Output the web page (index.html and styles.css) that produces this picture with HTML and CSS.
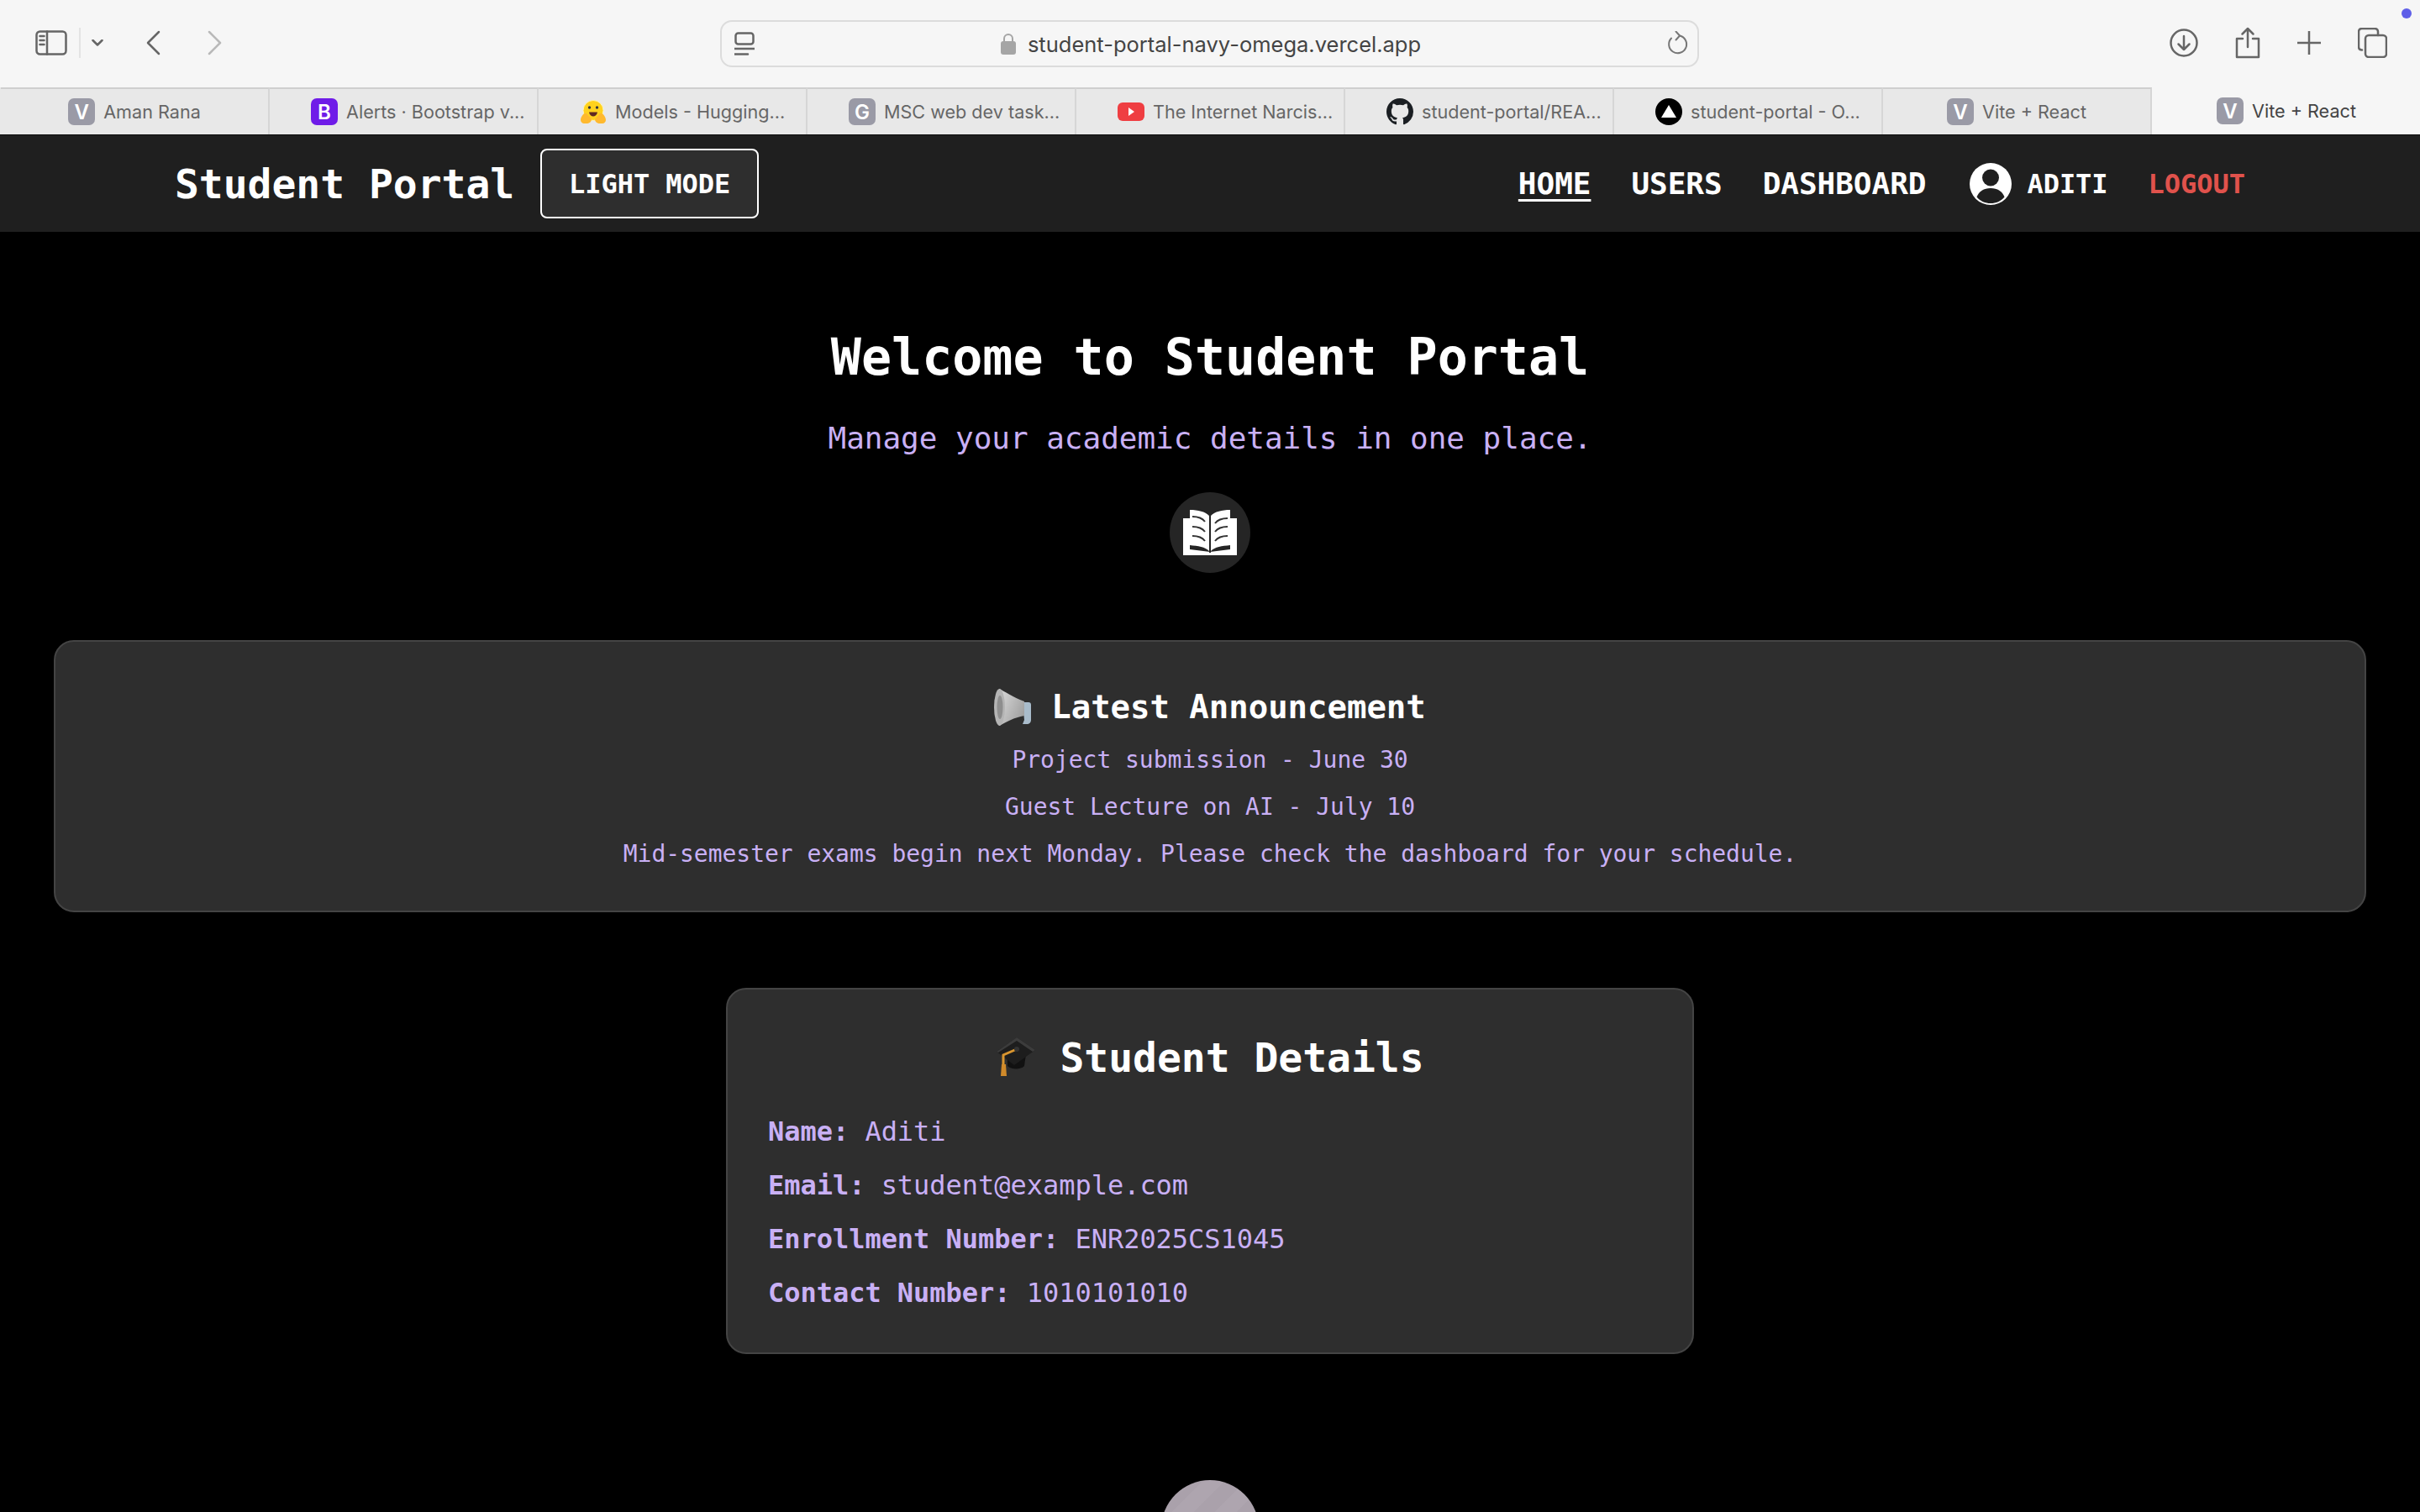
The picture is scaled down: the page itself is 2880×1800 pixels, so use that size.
FILE: index.html
```html
<!DOCTYPE html>
<html lang="en">
<head>
  <meta charset="UTF-8" />
  <title>Vite + React</title>
  <link rel="stylesheet" href="styles.css">
</head>
<body>
  <div class="toolbar">
    <div class="toolbar-left">
      <svg class="ico" width="38" height="30" viewBox="0 0 38 30"><rect x="1.5" y="1.5" width="35" height="27" rx="4"/><path d="M14 1.5v27M5.5 7h5M5.5 12h5M5.5 17h5"/></svg>
      <span class="sep"></span>
      <svg class="ico chev" width="14" height="8" viewBox="0 0 14 8"><path d="M1.5 1l5.5 5.5L12.5 1"/></svg>
      <svg class="ico back" width="18" height="30" viewBox="0 0 18 30"><path d="M16 2L3 15l13 13"/></svg>
      <svg class="ico fwd" width="18" height="30" viewBox="0 0 18 30"><path d="M2 2l13 13L2 28"/></svg>
    </div>
    <div class="address">
      <svg class="ico addr-ico" width="24" height="28" viewBox="0 0 24 28"><rect x="1.5" y="1.5" width="21" height="13" rx="3"/><path d="M0 20h24M0 26.500h16"/></svg>
      <div class="url">
        <svg width="18" height="26" viewBox="0 0 18 26"><path d="M4 11V7a5 5 0 0 1 10 0v4" fill="none" stroke="#a5a5a5" stroke-width="2"/><rect y="10" width="18" height="16" rx="3" fill="#a5a5a5"/></svg>
        <span>student-portal-navy-omega.vercel.app</span>
      </div>
      <svg class="ico reload" width="26" height="30" viewBox="0 0 26 30"><path d="M15 5.500A10.500 10.500 0 1 1 5 8.500"/><path d="M10.500 0.500l4.500 5-4.500 5"/></svg>
    </div>
    <div class="toolbar-right">
      <svg class="ico" width="34" height="34" viewBox="0 0 34 34"><circle cx="17" cy="17" r="15.500"/><path d="M17 9v16M10.500 18.500L17 25l6.500-6.500"/></svg>
      <svg class="ico" width="30" height="38" viewBox="0 0 30 38"><path d="M9 14H2v22h26V14h-7M15 24V2M8.500 8.500L15 2l6.500 6.500"/></svg>
      <svg class="ico" width="28" height="28" viewBox="0 0 28 28"><path d="M14 0v28M0 14h28"/></svg>
      <svg class="ico" width="35" height="36" viewBox="0 0 35 36"><rect x="9" y="9" width="25" height="26" rx="4"/><path d="M5 26.500c-2.500 0-4-1.500-4-4V5c0-2.500 1.500-4 4-4h15c2.500 0 4 1.500 4 4v4"/></svg>
    </div>
    <span class="dot"></span>
  </div>

  <div class="tabs">
    <div class="tab"><span class="fav fav-grey">V</span><span>Aman Rana</span></div>
    <div class="tab tab-long"><span class="fav fav-purple">B</span><span>Alerts · Bootstrap v...</span></div>
    <div class="tab tab-long">
      <svg class="fav-svg" width="32" height="32" viewBox="0 0 32 32"><circle cx="16" cy="14.500" r="12" fill="#ffd21e" stroke="#fff3b8"/><circle cx="11.500" cy="11" r="1.700" fill="#32343d"/><circle cx="20.500" cy="11" r="1.700" fill="#32343d"/><path d="M11 16.500h10c-.5 3.500-2.800 5-5 5s-4.500-1.500-5-5z" fill="#5f2a22"/><path d="M1 26c0-4 4-9 7-8l6 7c0 3-3 5-6 5H5c-2 0-4-2-4-4zM31 26c0-4-4-9-7-8l-6 7c0 3 3 5 6 5h3c2 0 4-2 4-4z" fill="#ffb92e"/></svg>
      <span>Models - Hugging...</span>
    </div>
    <div class="tab tab-long"><span class="fav fav-grey">G</span><span>MSC web dev task...</span></div>
    <div class="tab tab-long">
      <svg class="fav-svg" width="32" height="32" viewBox="0 0 32 32"><rect y="5" width="32" height="22" rx="6" fill="#ef3e42"/><path d="M13 11l7 5-7 5z" fill="#fff"/></svg>
      <span>The Internet Narcis...</span>
    </div>
    <div class="tab tab-long">
      <svg class="fav-svg" width="32" height="32" viewBox="0 0 16 16"><path fill="#1b1f23" d="M8 0C3.580 0 0 3.580 0 8c0 3.540 2.290 6.530 5.470 7.590.4.070.55-.17.55-.38 0-.19-.01-.82-.01-1.490-2.010.37-2.530-.49-2.690-.94-.09-.23-.48-.94-.82-1.130-.28-.15-.68-.52-.01-.53.63-.01 1.080.58 1.230.82.720 1.210 1.870.87 2.330.66.070-.52.280-.87.510-1.070-1.780-.2-3.640-.89-3.640-3.950 0-.87.310-1.590.820-2.150-.08-.2-.36-1.020.08-2.120 0 0 .67-.21 2.200.82.640-.18 1.320-.27 2-.27s1.360.09 2 .27c1.530-1.040 2.200-.82 2.200-.82.440 1.100.160 1.920.080 2.120.51.560.82 1.270.82 2.150 0 3.070-1.870 3.750-3.650 3.950.29.250.54.730.54 1.480 0 1.070-.01 1.930-.01 2.200 0 .21.150.46.550.38A8.010 8.010 0 0 0 16 8c0-4.420-3.580-8-8-8z"/></svg>
      <span>student-portal/REA...</span>
    </div>
    <div class="tab tab-long">
      <svg class="fav-svg" width="32" height="32" viewBox="0 0 32 32"><circle cx="16" cy="16" r="16" fill="#000"/><path d="M16 8l9 15H7z" fill="#fff"/></svg>
      <span>student-portal - O...</span>
    </div>
    <div class="tab"><span class="fav fav-grey">V</span><span>Vite + React</span></div>
    <div class="tab tab-active"><span class="fav fav-grey">V</span><span>Vite + React</span></div>
  </div>

  <nav class="navbar">
    <span class="logo">Student Portal</span>
    <button class="theme-btn">LIGHT MODE</button>
    <div class="nav-links">
      <a class="nav-link active">HOME</a>
      <a class="nav-link">USERS</a>
      <a class="nav-link">DASHBOARD</a>
      <div class="user">
        <svg width="50" height="50" viewBox="0 0 50 50"><circle cx="25" cy="25" r="25" fill="#fff"/><circle cx="25" cy="17.500" r="10" fill="#1f1f1f"/><path d="M8.500 40.500C11 34 17 30 25 30s14 4 16.500 10.500C37.500 45.500 31.500 48 25 48s-12.500-2.500-16.500-7.500z" fill="#1f1f1f"/></svg>
        <span>ADITI</span>
      </div>
      <a class="logout">LOGOUT</a>
    </div>
  </nav>

  <main class="content">
    <h1>Welcome to Student Portal</h1>
    <p class="subtitle">Manage your academic details in one place.</p>
    <div class="book">
      <svg width="64" height="56" viewBox="0 0 64 56">
        <path d="M0 11h8v37l24 3 24-3V11h8v44H0z" fill="#fff"/>
        <path d="M8 1c10 0 18 2 23 7v42C26 45 18 44 8 43z" fill="#fff"/>
        <path d="M56 1c-10 0-18 2-23 7v42c5-5 13-6 23-7z" fill="#fff"/>
        <path d="M32 8v44" stroke="#222" stroke-width="2"/>
        <path d="M11 9c7 0 12 2 15 6M11 21c7 0 12 2 15 6M11 32c7 0 12 2 15 6M53 11c-7 0-12 2-15 6M53 21c-7 0-12 2-15 6M53 32c-7 0-12 2-15 6" fill="none" stroke="#333" stroke-width="2"/>
      </svg>
    </div>

    <section class="card announce">
      <h2>
        <svg width="44" height="46" viewBox="0 0 44 46">
          <defs><linearGradient id="horn" x1="0" y1="0" x2="1" y2="0.600"><stop offset="0" stop-color="#dcdcdc"/><stop offset="1" stop-color="#a2a2a2"/></linearGradient></defs>
          <path d="M34 17h7c2 0 3 1 3 3v18c0 3-2 5-5 5h-5l2-5z" fill="#a9bccb"/>
          <path d="M6 1c5 2 18 11 30 15v17c-12 2-22 8-30 12z" fill="url(#horn)"/>
          <ellipse cx="6.500" cy="23" rx="6.500" ry="22" fill="#b4b4b4"/>
          <ellipse cx="7" cy="23" rx="3.500" ry="14" fill="#8e8e8e"/>
        </svg>
        <span>Latest Announcement</span>
      </h2>
      <p>Project submission - June 30</p>
      <p>Guest Lecture on AI - July 10</p>
      <p>Mid-semester exams begin next Monday. Please check the dashboard for your schedule.</p>
    </section>

    <section class="card details">
      <h2>
        <svg width="46" height="48" viewBox="0 0 46 48">
          <path d="M13 20v14c3 4 16 5 20 0l2-14z" fill="#111"/>
          <path d="M0 17L24 0l22 15-25 18z" fill="#1d1d1d"/>
          <path d="M0 17L24 0l22 15-3 2L24 4 2 18z" fill="#3c3c3c"/>
          <path d="M24 14L8 21v12" fill="none" stroke="#d8952f" stroke-width="3"/>
          <circle cx="24" cy="14" r="3" fill="#333"/>
          <path d="M6 32h5l1 14H5z" fill="#d08a2a"/>
        </svg>
        <span>Student Details</span>
      </h2>
      <p><b>Name:</b> Aditi</p>
      <p><b>Email:</b> student@example.com</p>
      <p><b>Enrollment Number:</b> ENR2025CS1045</p>
      <p><b>Contact Number:</b> 1010101010</p>
    </section>

    <div class="bottom-circle"></div>
  </main>
</body>
</html>
```

FILE: styles.css
```css
* {
  box-sizing: border-box;
}
html, body {
  height: 1800px;
  overflow: hidden;
}
body {
  margin: 0;
  background: #000;
  font-family: "DejaVu Sans Mono", "Liberation Mono", monospace;
  letter-spacing: -0.002em;
  color: #fff;
}

/* browser chrome */
.toolbar {
  height: 104px;
  background: #f6f6f6;
  display: grid;
  grid-template-columns: 857px 1165px 1fr;
  align-items: center;
  position: relative;
}
.ico {
  fill: none;
  stroke: #666;
  stroke-width: 2.5;
  stroke-linecap: round;
  stroke-linejoin: round;
  flex: none;
}
.toolbar-left {
  display: flex;
  align-items: center;
  padding: 0 0 2px 42px;
}
.sep {
  width: 2px;
  height: 36px;
  background: #e3e3e3;
  margin: 0 13px 0 14px;
}
.chev {
  margin-right: 50px;
}
.back {
  margin-right: 56px;
}
.fwd {
  stroke: #b9b9b9;
}
.address {
  height: 56px;
  border: 2px solid #dcdcdc;
  border-radius: 14px;
  display: flex;
  align-items: center;
  justify-content: space-between;
  padding: 0 10px 0 15px;
}
.reload {
  stroke: #777;
  stroke-width: 2;
}
.url {
  display: flex;
  align-items: center;
  gap: 14px;
  font-family: Inter, "Noto Sans", sans-serif;
  font-size: 25.5px;
  letter-spacing: 0;
  color: #444;
}
.toolbar-right {
  display: flex;
  align-items: center;
  justify-content: flex-end;
  gap: 44px;
  padding: 0 39px 2px 0;
}
.dot {
  position: absolute;
  top: 10px;
  right: 10px;
  width: 12px;
  height: 12px;
  border-radius: 50%;
  background: #5f5fe8;
}

.tabs {
  height: 56px;
  display: flex;
  padding-left: 1px;
  background: #e8e8e8;
  font-family: Inter, "Noto Sans", sans-serif;
  font-size: 21.6px;
  letter-spacing: 0;
  color: #666;
}
.tab {
  width: 320px;
  flex: none;
  display: flex;
  align-items: center;
  justify-content: center;
  gap: 10px;
  border-top: 2px solid #cfcfcf;
  border-right: 2px solid #d6d6d6;
  white-space: nowrap;
}
.tab-long {
  justify-content: flex-start;
  padding-left: 49px;
}
.tab-active {
  background: #f6f6f6;
  border: none;
  color: #444;
}
.fav {
  width: 32px;
  height: 32px;
  border-radius: 7px;
  display: flex;
  align-items: center;
  justify-content: center;
  color: #fff;
  font-weight: 600;
  font-size: 24px;
}
.fav-grey {
  background: #9a9aa6;
}
.fav-purple {
  background: #6f1ce8;
}
.fav-svg {
  flex: none;
}

/* navbar */
.navbar {
  height: 116px;
  background: #1f1f1f;
  border-top: 1px solid #0c0c0c;
  display: flex;
  align-items: center;
  padding: 0 208px;
}
.logo {
  font-size: 48px;
  font-weight: 700;
  margin-right: 31px;
}
.theme-btn {
  width: 260px;
  height: 83px;
  background: #2e2e2e;
  color: #fff;
  border: 2px solid #fff;
  border-radius: 8px;
  font-family: inherit;
  font-size: 32px;
  letter-spacing: inherit;
  font-weight: 700;
}
.nav-links {
  margin-left: auto;
  display: flex;
  align-items: center;
  gap: 48px;
}
.nav-link {
  font-size: 36px;
  font-weight: 700;
}
.nav-link.active {
  text-decoration: underline;
  text-underline-offset: 6px;
}
.user {
  display: flex;
  align-items: center;
  gap: 18px;
  margin-left: 4px;
  font-size: 32px;
  font-weight: 700;
}
.logout {
  font-size: 32px;
  font-weight: 700;
  color: #e0524c;
}

/* page */
.content {
  display: flex;
  flex-direction: column;
  align-items: center;
  padding: 113px 64px 0;
  text-align: center;
}
h1 {
  margin: 0 0 37px;
  font-size: 60px;
  line-height: 72px;
  font-weight: 700;
}
.subtitle {
  margin: 0 0 40px;
  font-size: 36px;
  line-height: 48px;
  color: #c9b0f5;
}
.book {
  width: 96px;
  height: 96px;
  border-radius: 50%;
  background: #252525;
  display: flex;
  align-items: center;
  justify-content: center;
  margin-bottom: 80px;
}
.card {
  background: #2e2e2e;
  border: 2px solid #444;
  border-radius: 24px;
  color: #c9b0f5;
}
.card h2 {
  margin: 0;
  display: flex;
  align-items: center;
  justify-content: center;
  color: #fff;
  font-weight: 700;
}
.card p {
  margin: 0;
}
.announce {
  width: 2752px;
  height: 324px;
  padding-top: 54px;
  font-size: 28px;
  line-height: 56px;
  margin-bottom: 90px;
}
.announce h2 {
  gap: 24px;
  font-size: 39px;
  line-height: 48px;
  margin-bottom: 11px;
}
.details {
  width: 1152px;
  height: 436px;
  padding: 52px 48px 0;
  font-size: 32px;
  line-height: 64px;
  text-align: left;
  margin-bottom: 150px;
}
.details h2 {
  gap: 30px;
  font-size: 48px;
  line-height: 58px;
  margin-bottom: 27px;
}
.bottom-circle {
  width: 116px;
  height: 116px;
  flex: none;
  border-radius: 50%;
  background: repeating-linear-gradient(135deg, #aea5af 0 18px, #aaa1ab 18px 36px);
}
```
